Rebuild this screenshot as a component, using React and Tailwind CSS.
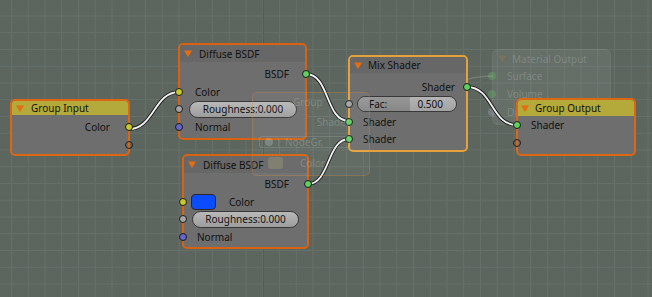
import React from "react";

function Tri({ faint }) {
  return (
    <svg width="8" height="7" viewBox="0 0 8 7" className="shrink-0">
      <polygon points="0,0.5 8,0.5 4,7" fill={faint ? "rgba(230,120,40,0.18)" : "#e46d12"} />
    </svg>
  );
}

function Socket({ color, side, hollow }) {
  const pos = side === "left" ? "left-[-5px]" : "right-[-5px]";
  if (hollow) {
    return (
      <span
        className={`absolute ${pos} top-1/2 -translate-y-1/2 w-[8px] h-[8px] rounded-full border border-[#202020]`}
      />
    );
  }
  return (
    <span
      className={`absolute ${pos} top-1/2 -translate-y-1/2 w-[8px] h-[8px] rounded-full border border-[#1a1a1a] ${color}`}
    />
  );
}

const YELLOW = "bg-[#c9c92b]";
const GRAY = "bg-[#a5a5a5]";
const PURPLE = "bg-[#6666cc]";
const GREEN = "bg-[#5fcf5f]";

function RoughSlider({ className }) {
  return (
    <div
      className={`h-[17px] rounded-full border border-[#383838] bg-[linear-gradient(to_bottom,#b9b9b9,#9d9d9d)] flex items-center justify-center ${className}`}
    >
      Roughness:0.000
    </div>
  );
}

export default function App() {
  return (
    <div className="relative w-[652px] h-[297px] overflow-hidden bg-[#5c665f] bg-[linear-gradient(to_right,transparent_263px,#525b55_263px,#525b55_264px,transparent_264px),linear-gradient(to_right,#66706a_1px,transparent_1px),linear-gradient(to_bottom,#66706a_1px,transparent_1px)] bg-size-[100%_100%,16.75px_16.75px,16.75px_16.75px] bg-position-[0_0,11px_15.5px,11px_15.5px] font-['Noto_Sans',sans-serif] text-[10px] leading-none text-[#111]">
      {/* Faded parent-tree node: Material Output */}
      <div className="absolute left-[492px] top-[49px] w-[119px] h-[76px] rounded-[6px] bg-white/[0.06] border border-white/[0.04] flex flex-col text-white/[0.18]">
        <div className="h-[17px] flex items-center pl-[5px] gap-[6px]">
          <Tri faint />
          <span>Material Output</span>
        </div>
        <div className="relative h-[18px] flex items-center pl-[14px]">
          <span className="absolute left-[-5px] top-1/2 -translate-y-1/2 w-[8px] h-[8px] rounded-full bg-[#63c763]/30" />
          Surface
        </div>
        <div className="relative h-[18px] flex items-center pl-[14px]">
          <span className="absolute left-[-5px] top-1/2 -translate-y-1/2 w-[8px] h-[8px] rounded-full bg-[#63c763]/30" />
          Volume
        </div>
        <div className="relative h-[18px] flex items-center pl-[14px]">
          <span className="absolute left-[-5px] top-1/2 -translate-y-1/2 w-[8px] h-[8px] rounded-full bg-[#c0c0e0]/25" />
          Di
        </div>
      </div>

      {/* Links */}
      <svg className="absolute inset-0 pointer-events-none" width="652" height="297">
        <path d="M370,122 C432,122 432,76 493,76" fill="none" stroke="rgba(255,255,255,0.14)" strokeWidth="1.5" />
        {[
          "M129,129 C154,129 154,92 179,92",
          "M306,74 C330,74 325,121 349,121",
          "M308,184 C330,184 327,139 349,139",
          "M467,87 C493,87 491,125 517,125",
        ].map((d) => (
          <g key={d}>
            <path d={d} fill="none" stroke="#1b1b1b" strokeWidth="3.6" />
            <path d={d} fill="none" stroke="#f2f2f2" strokeWidth="1.8" />
          </g>
        ))}
      </svg>

      {/* Group Input */}
      <div className="absolute left-[10px] top-[99px] w-[120px] h-[57px] rounded-[5px] border-2 border-[#dc6612] bg-[#6e6e6e] flex flex-col">
        <div className="h-[16px] rounded-t-[3px] bg-[#b4aa3c] flex items-center pl-[4px] gap-[7px]">
          <Tri />
          <span>Group Input</span>
        </div>
        <div className="pt-[3px] flex flex-col">
          <div className="relative h-[18px] flex items-center justify-end pr-[18px]">
            Color
            <Socket color={YELLOW} side="right" />
          </div>
          <div className="relative h-[18px] flex items-center justify-end pr-[18px]">
            <Socket side="right" hollow />
          </div>
        </div>
      </div>

      {/* Diffuse BSDF 1 */}
      <div className="absolute left-[178px] top-[43px] w-[129px] h-[97px] rounded-[5px] border-2 border-[#d8620f] bg-[#6e6e6e] flex flex-col">
        <div className="h-[17px] rounded-t-[3px] bg-[#676767] flex items-center pl-[4px] gap-[7px]">
          <Tri />
          <span>Diffuse BSDF</span>
        </div>
        <div className="pt-[3px] flex flex-col">
          <div className="relative h-[17.7px] flex items-center justify-end pr-[16px]">
            BSDF
            <Socket color={GREEN} side="right" />
          </div>
          <div className="relative h-[17.7px] flex items-center pl-[15px]">
            Color
            <Socket color={YELLOW} side="left" />
          </div>
          <div className="relative h-[17.7px] flex items-center">
            <RoughSlider className="ml-[9px] mr-[8px] flex-1" />
            <Socket color={GRAY} side="left" />
          </div>
          <div className="relative h-[17.7px] flex items-center pl-[15px]">
            Normal
            <Socket color={PURPLE} side="left" />
          </div>
        </div>
      </div>

      {/* Diffuse BSDF 2 */}
      <div className="absolute left-[182px] top-[154px] w-[127px] h-[95px] rounded-[5px] border-2 border-[#d8620f] bg-[#6e6e6e] flex flex-col">
        <div className="h-[17px] rounded-t-[3px] bg-[#676767] flex items-center pl-[4px] gap-[7px]">
          <Tri />
          <span>Diffuse BSDF</span>
        </div>
        <div className="pt-[2px] flex flex-col">
          <div className="relative h-[17.7px] flex items-center justify-end pr-[18px]">
            BSDF
            <Socket color={GREEN} side="right" />
          </div>
          <div className="relative h-[17.7px] flex items-center pl-[7px]">
            <span className="w-[25px] h-[16px] rounded-[4px] border border-[#2a2a2a] bg-[#0b4cff]" />
            <span className="ml-[13px]">Color</span>
            <Socket color={YELLOW} side="left" />
          </div>
          <div className="relative h-[17.7px] flex items-center">
            <RoughSlider className="ml-[8px] mr-[8px] flex-1" />
            <Socket color={GRAY} side="left" />
          </div>
          <div className="relative h-[17.7px] flex items-center pl-[13px]">
            Normal
            <Socket color={PURPLE} side="left" />
          </div>
        </div>
      </div>

      {/* Mix Shader */}
      <div className="absolute left-[348px] top-[55px] w-[120px] h-[97px] rounded-[5px] border-2 border-[#e6a13c] bg-[#6e6e6e] flex flex-col">
        <div className="h-[16px] rounded-t-[3px] bg-[#676767] flex items-center pl-[4px] gap-[6px]">
          <Tri />
          <span>Mix Shader</span>
        </div>
        <div className="pt-[5px] flex flex-col">
          <div className="relative h-[17.5px] flex items-center justify-end pr-[11px]">
            Shader
            <Socket color={GREEN} side="right" />
          </div>
          <div className="relative h-[17.5px] flex items-center">
            <div className="ml-[7px] mr-[9px] flex-1 h-[16px] rounded-full border border-[#383838] overflow-hidden flex">
              <div className="w-[52px] bg-[linear-gradient(to_bottom,#979797,#878787)] flex items-center pl-[11px]">Fac:</div>
              <div className="flex-1 bg-[linear-gradient(to_bottom,#b4b4b4,#a3a3a3)] flex items-center justify-end pr-[13px]">0.500</div>
            </div>
            <Socket color={GRAY} side="left" />
          </div>
          <div className="relative h-[17.5px] flex items-center pl-[13px]">
            Shader
            <Socket color={GREEN} side="left" />
          </div>
          <div className="relative h-[17.5px] flex items-center pl-[13px]">
            Shader
            <Socket color={GREEN} side="left" />
          </div>
        </div>
      </div>

      {/* Group Output */}
      <div className="absolute left-[516px] top-[98px] w-[120px] h-[58px] rounded-[5px] border-2 border-[#dc6612] bg-[#6e6e6e] flex flex-col">
        <div className="h-[16px] rounded-t-[3px] bg-[#b4aa3c] flex items-center pl-[3px] gap-[6px]">
          <Tri />
          <span>Group Output</span>
        </div>
        <div className="flex flex-col">
          <div className="relative h-[18px] flex items-center pl-[13px]">
            Shader
            <Socket color={GREEN} side="left" />
          </div>
          <div className="relative h-[18px] flex items-center">
            <Socket side="left" hollow />
          </div>
        </div>
      </div>

      {/* Faded parent-tree group node, showing through */}
      <div className="absolute left-[252px] top-[92px] w-[118px] h-[84px] rounded-[5px] border border-[#d08a3c]/30 bg-white/[0.04] flex flex-col text-[#dcdcc8]/25">
        <div className="h-[17px] flex items-center pl-[40px]">Group</div>
        <div className="mt-[3px] h-[18px] flex items-center justify-end pr-[19px]">Shader</div>
        <div className="h-[22px] flex items-center pl-[6px]">
          <div className="flex-1 mr-[19px] h-[12px] rounded-[3px] border border-white/[0.12] flex items-center">
            <span className="ml-[5px] w-[8px] h-[8px] rounded-full bg-white/[0.18]" />
            <span className="ml-[5px] w-[1px] h-[8px] bg-white/[0.12]" />
            <span className="ml-[6px]">NodeGr.</span>
          </div>
        </div>
        <div className="h-[20px] flex items-center pl-[15px]">
          <span className="w-[15px] h-[12px] rounded-[3px] bg-[#d8c68a]/20" />
          <span className="ml-[17px]">Color</span>
        </div>
      </div>
    </div>
  );
}
